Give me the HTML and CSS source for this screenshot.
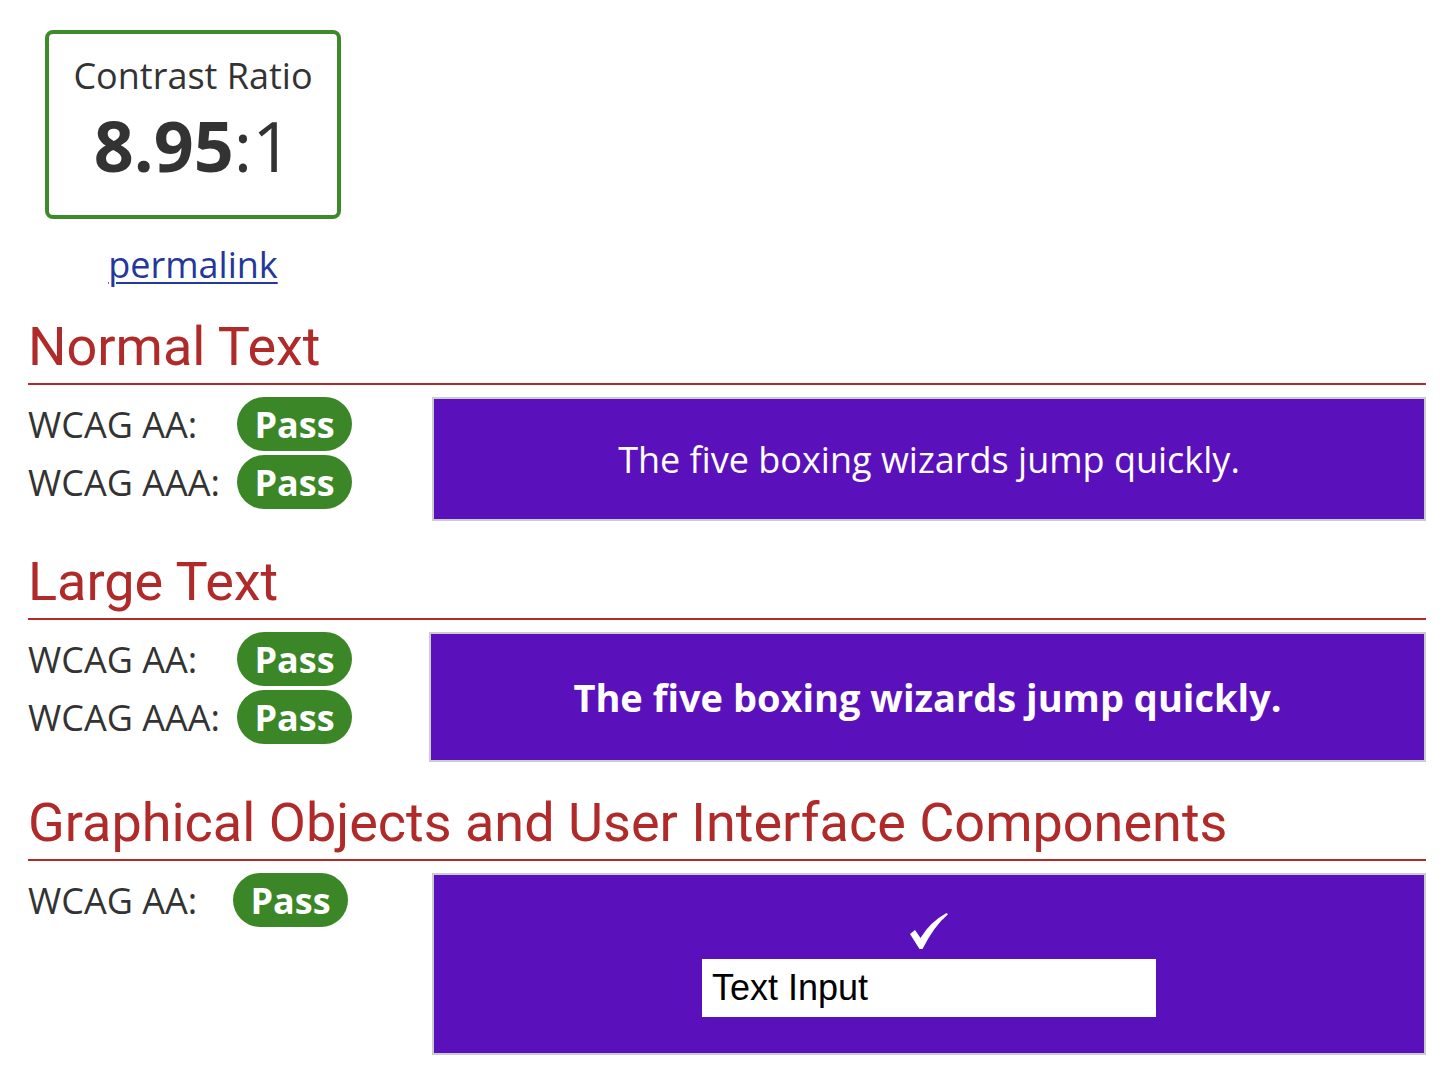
FILE: index.html
```html
<!DOCTYPE html>
<html lang="en">
<head>
<meta charset="utf-8">
<title>Contrast Checker</title>
<link rel="stylesheet" href="styles.css">
</head>
<body>
<main class="page">
  <div class="ratio-col">
    <div class="ratio-box">
      <div class="ratio-label">Contrast Ratio</div>
      <div class="ratio-value"><b>8.95</b>:1</div>
    </div>
    <a class="permalink" href="#">permalink</a>
  </div>

  <section class="section">
    <h2 class="section-title">Normal Text</h2>
    <div class="row">
      <div class="results">
        <div class="result"><span class="label">WCAG AA:</span><span class="badge">Pass</span></div>
        <div class="result"><span class="label">WCAG AAA:</span><span class="badge">Pass</span></div>
      </div>
      <div class="sample sample-normal">The five boxing wizards jump quickly.</div>
    </div>
  </section>

  <section class="section">
    <h2 class="section-title">Large Text</h2>
    <div class="row">
      <div class="results results-large">
        <div class="result"><span class="label">WCAG AA:</span><span class="badge">Pass</span></div>
        <div class="result"><span class="label">WCAG AAA:</span><span class="badge">Pass</span></div>
      </div>
      <div class="sample sample-large">The five boxing wizards jump quickly.</div>
    </div>
  </section>

  <section class="section">
    <h2 class="section-title">Graphical Objects and User Interface Components</h2>
    <div class="row">
      <div class="results">
        <div class="result"><span class="label label-short">WCAG AA:</span><span class="badge">Pass</span></div>
      </div>
      <div class="sample sample-ui">
        <svg class="check" viewBox="0 0 38 36" width="38" height="36" aria-hidden="true">
          <path d="M0 21 L5 17 L10.5 25 Q20 9 36.5 0 L38 1.2 Q24 13 12.5 36 L9.5 36 Z" fill="#ffffff"/>
        </svg>
        <div class="text-input">Text Input</div>
      </div>
    </div>
  </section>
</main>
</body>
</html>
```

FILE: styles.css
```css
html, body {
  margin: 0;
  padding: 0;
  background: #ffffff;
}

.page {
  padding: 30px 25px 0 28px;
  font-family: "Open Sans", "Noto Sans", sans-serif;
  color: #333333;
}

.ratio-col {
  width: 296px;
  margin-left: 17px;
  display: flex;
  flex-direction: column;
  align-items: center;
}

.ratio-box {
  box-sizing: border-box;
  width: 296px;
  height: 189px;
  border: 4px solid #3c8a28;
  border-radius: 8px;
  display: flex;
  flex-direction: column;
  align-items: center;
  padding-top: 18px;
}

.ratio-label {
  font-size: 36px;
  line-height: 48px;
}

.ratio-value {
  font-size: 70px;
  line-height: 86px;
  margin-top: 2px;
}

.ratio-value b {
  font-weight: 700;
}

.permalink {
  margin-top: 22px;
  font-size: 36px;
  line-height: 48px;
  color: #24379a;
  text-decoration: underline;
  text-decoration-thickness: 2px;
  text-underline-offset: 4px;
}

.section {
  margin-top: 30px;
}

.section:first-of-type {
  margin-top: 27px;
}

.section-title {
  margin: 0;
  font-family: Roboto, "Liberation Sans", sans-serif;
  font-weight: 400;
  font-size: 54px;
  line-height: 62px;
  color: #b02a2a;
  border-bottom: 2px solid #b02a2a;
  padding-bottom: 5px;
}

.row {
  display: flex;
  align-items: flex-start;
  margin-top: 12px;
}

.results {
  width: 404px;
  flex: none;
  display: flex;
  flex-direction: column;
  gap: 4px;
}

.results-large {
  width: 401px;
}

.result {
  display: flex;
  align-items: center;
  height: 54px;
}

.label {
  width: 209px;
  flex: none;
  font-size: 36px;
  color: #333333;
}

.label-short {
  width: 205px;
}

.badge {
  box-sizing: border-box;
  width: 115px;
  height: 54px;
  border-radius: 27px;
  background: #3b8728;
  color: #ffffff;
  font-weight: 700;
  font-size: 36px;
  display: flex;
  align-items: center;
  justify-content: center;
}

.sample {
  flex: 1;
  box-sizing: border-box;
  border: 2px solid #cccccc;
  background: #5a11bb;
  color: #ffffff;
  display: flex;
  align-items: center;
  justify-content: center;
}

.sample-normal {
  height: 124px;
  font-size: 36px;
}

.sample-large {
  height: 130px;
  font-size: 38px;
  font-weight: 700;
}

.sample-ui {
  height: 182px;
  flex-direction: column;
  justify-content: flex-start;
  padding-top: 38px;
}

.check {
  display: block;
  margin-bottom: 10px;
}

.text-input {
  box-sizing: border-box;
  width: 454px;
  height: 58px;
  background: #ffffff;
  color: #000000;
  font-family: "Liberation Sans", Arial, sans-serif;
  font-size: 36px;
  line-height: 58px;
  padding-left: 10px;
}
```
